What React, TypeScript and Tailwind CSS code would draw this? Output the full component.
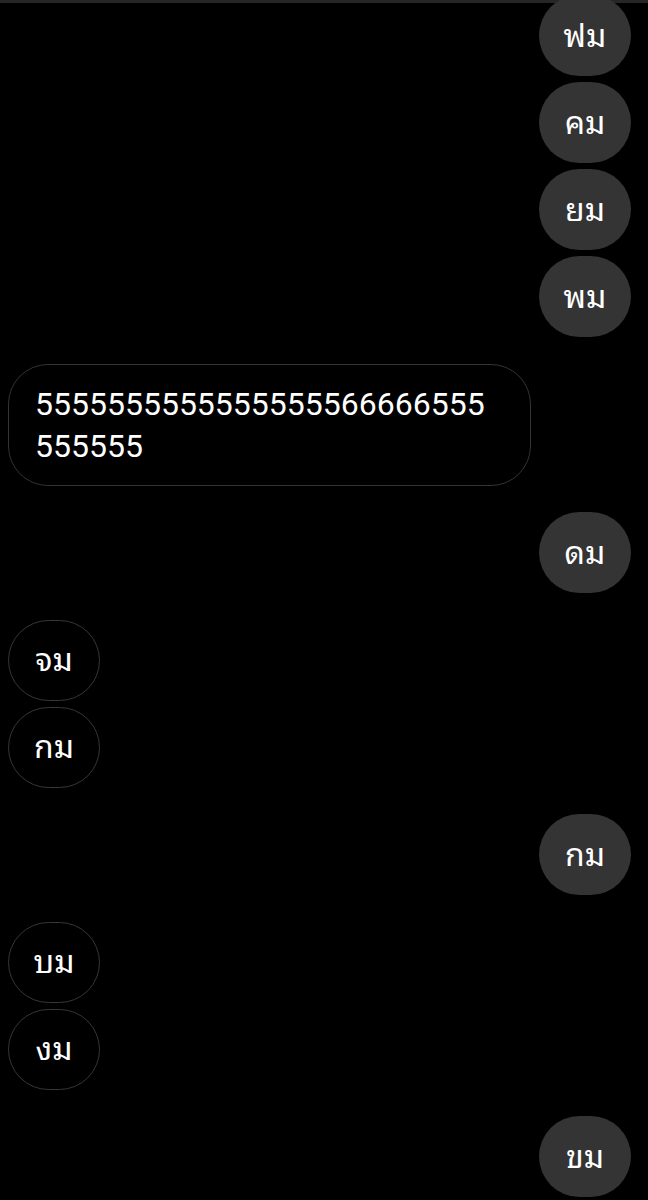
const font = {
  fontFamily:
    '"Roboto", "Noto Sans Thai Looped", "Noto Serif Thai", "Garuda", "Loma", "Noto Sans Thai", "Noto Sans", sans-serif',
};

type Msg = { text: string; mine: boolean };

// messages grouped as they appear in the thread
const groups: Msg[][] = [
  [
    { text: "ฟม", mine: true },
    { text: "คม", mine: true },
    { text: "ยม", mine: true },
    { text: "พม", mine: true },
  ],
  [{ text: "5555555555555555566666555555555", mine: false }],
  [{ text: "ดม", mine: true }],
  [
    { text: "จม", mine: false },
    { text: "กม", mine: false },
  ],
  [{ text: "กม", mine: true }],
  [
    { text: "บม", mine: false },
    { text: "งม", mine: false },
  ],
  [{ text: "ขม", mine: true }],
];

function Bubble({ msg }: { msg: Msg }) {
  if (msg.text.length > 4) {
    return (
      <div className="w-[523px] rounded-[40px] border-[1.5px] border-[#333333] bg-black pl-[26px] pr-[36px] py-[18px] text-[32px] leading-[42px] text-white break-all">
        {msg.text}
      </div>
    );
  }
  return (
    <div
      className={
        msg.mine
          ? "flex h-[81px] w-[92px] items-center justify-center rounded-[42px] bg-[#343434] text-[32px] text-white"
          : "flex h-[81px] w-[92px] items-center justify-center rounded-[42px] border-[1.5px] border-[#363636] bg-black text-[32px] text-white"
      }
    >
      {msg.text}
    </div>
  );
}

export default function App() {
  return (
    <div className="h-[1200px] w-[648px] overflow-hidden bg-black" style={font}>
      <div className="h-[3px] bg-[#262626]" />
      <div className="-mt-[8px] flex flex-col gap-[26.5px] pl-[8px] pr-[17px]">
        {groups.map((g, i) => (
          <div key={i} className="flex flex-col gap-[6px]">
            {g.map((m, j) => (
              <div key={j} className={m.mine ? "flex justify-end" : "flex justify-start"}>
                <Bubble msg={m} />
              </div>
            ))}
          </div>
        ))}
      </div>
    </div>
  );
}
